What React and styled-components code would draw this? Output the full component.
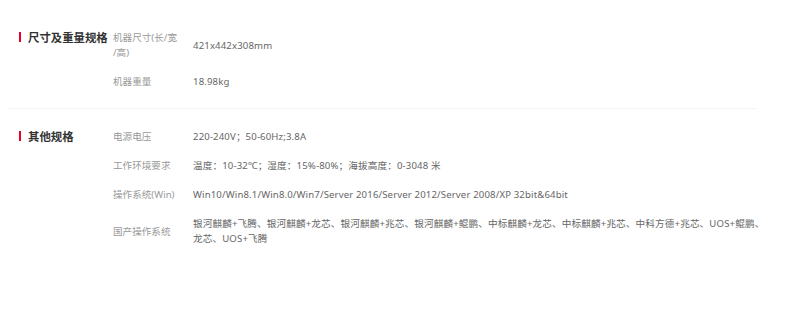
import React from "react"
import styled, { createGlobalStyle } from "styled-components"

const GlobalStyle = createGlobalStyle`
  body {
    margin: 0;
    background: #fff;
    font-family: "Noto Sans", "Noto Sans CJK SC", sans-serif;
  }
`

const specs = [
  {
    title: "尺寸及重量规格",
    rows: [
      // zero-width space so the label wraps before "/高)" like the original
      { label: "机器尺寸(长/宽\u200B/高)", value: "421x442x308mm" },
      { label: "机器重量", value: "18.98kg" },
    ],
  },
  {
    title: "其他规格",
    rows: [
      { label: "电源电压", value: "220-240V；50-60Hz;3.8A" },
      { label: "工作环境要求", value: "温度：10-32℃；湿度：15%-80%；海拔高度：0-3048 米" },
      {
        label: "操作系统(Win)",
        value: "Win10/Win8.1/Win8.0/Win7/Server 2016/Server 2012/Server 2008/XP 32bit&64bit",
      },
      {
        label: "国产操作系统",
        value:
          "银河麒麟+飞腾、银河麒麟+龙芯、银河麒麟+兆芯、银河麒麟+鲲鹏、中标麒麟+龙芯、中标麒麟+兆芯、中科方德+兆芯、UOS+鲲鹏、龙芯、UOS+飞腾",
      },
    ],
  },
]

const App = () => {
  return (
    <>
      <GlobalStyle />
      <Page>
        {specs.map((group, i) => (
          <Section key={group.title} last={i === specs.length - 1}>
            <Title>{group.title}</Title>
            <Rows>
              {group.rows.map((row) => (
                <Row key={row.label}>
                  <Label>{row.label}</Label>
                  <Value>{row.value}</Value>
                </Row>
              ))}
            </Rows>
          </Section>
        ))}
      </Page>
    </>
  )
}

export default App

const Page = styled.div`
  width: 748px;
  margin-left: 8px;
  padding-top: 30px;
`

const Section = styled.section`
  display: flex;
  padding: 0 0 ${(p) => (p.last ? "0" : "19px")} 11px;
  margin-bottom: ${(p) => (p.last ? "0" : "20px")};
  border-bottom: ${(p) => (p.last ? "none" : "1px solid #f3f3f3")};
`

const Title = styled.h3`
  position: relative;
  flex: 0 0 85px;
  margin: 0;
  padding-left: 9px;
  font-size: 11.4px;
  line-height: 15px;
  font-weight: 700;
  color: #333;
  font-family: "Noto Sans CJK SC", sans-serif;

  &::before {
    content: "";
    position: absolute;
    left: 0;
    top: 2px;
    width: 2px;
    height: 10px;
    background: #e60026;
  }
`

const Rows = styled.div`
  display: flex;
  flex-direction: column;
  gap: 14px;
  flex: 1;
`

const Row = styled.div`
  display: flex;
  align-items: center;
  gap: 14px;
  font-size: 9.6px;
  line-height: 15px;
`

const Label = styled.div`
  flex: 0 0 66px;
  color: #999;
`

const Value = styled.div`
  width: 575px;
  color: #666;
  letter-spacing: 0.14px;
`
